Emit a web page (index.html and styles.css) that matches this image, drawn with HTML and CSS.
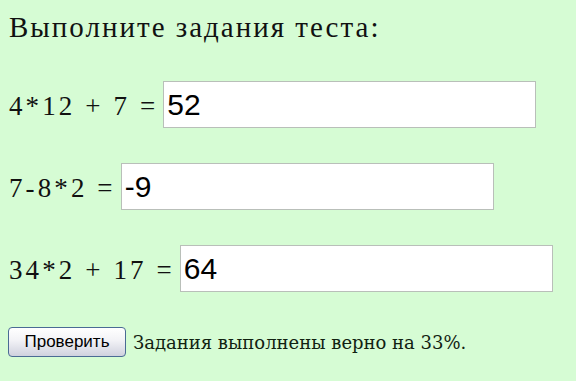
FILE: index.html
```html
<!DOCTYPE html>
<html lang="ru">
<head>
  <meta charset="UTF-8">
  <title>Тест</title>
  <link rel="stylesheet" href="styles.css">
</head>
<body>

  <!-- Заголовок теста -->
  <div class="title">Выполните задания теста:</div>

  <!-- Задания -->
  <form class="test">
    <div class="task">
      <span class="question">4*12 + 7 =</span>
      <input type="text" class="answer" value="52">
    </div>
    <div class="task">
      <span class="question">7-8*2 =</span>
      <input type="text" class="answer" value="-9">
    </div>
    <div class="task">
      <span class="question">34*2 + 17 =</span>
      <input type="text" class="answer" value="64">
    </div>

    <!-- Проверка -->
    <div class="check">
      <button type="button" class="check-btn">Проверить</button>
      <span class="result">Задания выполнены верно на 33%.</span>
    </div>
  </form>

</body>
</html>
```

FILE: styles.css
```css
html, body {
  background-color: #d6fcd4;
}

body {
  margin: 8px;
  font-family: 'Liberation Serif', 'Times New Roman', serif;
  color: #111;
}

.title {
  font-size: 29px;
  line-height: 32px;
  letter-spacing: 2px;
  margin: 3px 0 38px 1px;
}

.test {
  display: flex;
  flex-direction: column;
  gap: 35px;
}

.task {
  display: flex;
  align-items: center;
  gap: 5px;
  padding-left: 1px;
}

.question {
  font-size: 27px;
  letter-spacing: 3.1px;
  padding-top: 4px;
}

.answer {
  width: 373px;
  height: 47px;
  box-sizing: border-box;
  border: 1px solid #b9bfb9;
  padding: 0 3px;
  margin: 0;
  background: #fff;
  font-family: 'Liberation Sans', Arial, sans-serif;
  font-size: 30px;
  color: #000;
  outline: none;
}

.check {
  display: flex;
  align-items: center;
  gap: 7px;
}

.check-btn {
  width: 118px;
  height: 30px;
  margin: 0;
  padding: 0;
  border: 1px solid #4a6b94;
  border-radius: 4px;
  background: linear-gradient(#ffffff, #f2f2f6 45%, #cfd1de);
  font-family: 'Liberation Sans', Arial, sans-serif;
  font-size: 17px;
  color: #000;
}

.result {
  font-family: 'DejaVu Serif', serif;
  font-size: 18px;
  color: #112211;
}
```
